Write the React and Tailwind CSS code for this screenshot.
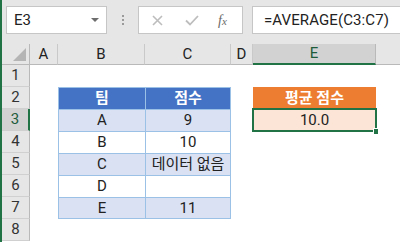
import React from 'react';

const font = { fontFamily: 'Roboto, "Noto Sans CJK KR", sans-serif' };

const cols = ['A', 'B', 'C', 'D', 'E'];

const rows = [
  { n: 1 },
  { n: 2, b: '팀', c: '점수', head: true, e: '평균 점수' },
  { n: 3, b: 'A', c: '9', band: true, e: '10.0' },
  { n: 4, b: 'B', c: '10' },
  { n: 5, b: 'C', c: '데이터 없음', band: true },
  { n: 6, b: 'D', c: '' },
  { n: 7, b: 'E', c: '11', band: true, last: true },
  { n: 8 },
];

const TopBar = () => (
  <div className="h-[44px] shrink-0 bg-[#e6e6e6] flex items-start pt-[6px] pl-[4px]">
    <div className="w-[101px] h-[28px] border border-[#c6c6c6] bg-white flex items-center justify-between pl-[7px] pr-[7px]">
      <span className="text-[15px] text-[#222]">E3</span>
      <svg width="8" height="5" viewBox="0 0 8 5">
        <path d="M0 0 H8 L4 4 Z" fill="#6d6d6d" />
      </svg>
    </div>
    <div className="w-[31px] h-[28px] flex flex-col items-center justify-center gap-[2px]">
      <span className="w-[2px] h-[2px] bg-[#9a9a9a]" />
      <span className="w-[2px] h-[2px] bg-[#9a9a9a]" />
      <span className="w-[2px] h-[2px] bg-[#9a9a9a]" />
    </div>
    <div className="w-[105px] h-[28px] border border-[#c6c6c6] bg-white flex items-center">
      <svg className="ml-[13px]" width="11" height="11" viewBox="0 0 11 11">
        <path d="M1 1 L10 10 M10 1 L1 10" stroke="#bdbdbd" strokeWidth="1.6" />
      </svg>
      <svg className="ml-[22px]" width="14" height="11" viewBox="0 0 14 11">
        <path d="M1 5.5 L5 9.5 L13 1" stroke="#bdbdbd" strokeWidth="1.8" fill="none" />
      </svg>
      <span
        className="ml-[19px] text-[14px] italic text-[#6a6a6a]"
        style={{ fontFamily: '"Liberation Serif", serif' }}
      >
        f<span className="text-[11px]">x</span>
      </span>
    </div>
    <div className="ml-[9px] flex-1 h-[28px] border border-r-0 border-[#c6c6c6] bg-white flex items-center pl-[11px]">
      <span className="text-[15px] text-[#222] tracking-[0.1px]">=AVERAGE(C3:C7)</span>
    </div>
  </div>
);

const ColHeader = () => (
  <>
    <div className="bg-[#e6e6e6] border-r border-b border-[#b9b9b9] flex items-end justify-end p-[3px]">
      <svg width="13" height="13" viewBox="0 0 13 13">
        <path d="M13 0 V13 H0 Z" fill="#b5b5b5" />
      </svg>
    </div>
    {cols.map((c) =>
      c === 'E' ? (
        <div
          key={c}
          className="bg-[#d2d2d2] border-r border-[#b9b9b9] border-b-2 border-b-[#217346] flex items-center justify-center text-[15px] text-[#1e5c3a]"
        >
          {c}
        </div>
      ) : (
        <div
          key={c}
          className="bg-[#e6e6e6] border-r border-b border-[#c9c9c9] border-b-[#b9b9b9] flex items-center justify-center text-[15px] text-[#222]"
        >
          {c}
        </div>
      )
    )}
    <div className="bg-[#e6e6e6] border-b border-[#b9b9b9]" />
  </>
);

const tableCell = (r, isFirst) => {
  const base = 'flex items-center justify-center text-[15px] border-[#9bc2e6] border-t';
  const left = 'border-l';
  const right = isFirst ? '' : 'border-r';
  const bottom = r.last ? 'border-b' : '';
  let bg = 'bg-white text-[#222]';
  if (r.head) bg = 'bg-[#4472c4] text-white font-bold';
  else if (r.band) bg = 'bg-[#d9e1f2] text-[#222]';
  return [base, left, right, bottom, bg].join(' ');
};

const Row = ({ r }) => {
  const inTable = r.b !== undefined;
  const selected = r.n === 3;
  return (
    <>
      {selected ? (
        <div className="bg-[#d2d2d2] border-b border-[#cfcfcf] border-r-2 border-r-[#217346] flex items-center justify-center text-[15px] text-[#1e5c3a]">
          {r.n}
        </div>
      ) : (
        <div className="bg-[#e6e6e6] border-b border-[#d0d0d0] border-r border-r-[#b9b9b9] flex items-center justify-center text-[15px] text-[#333]">
          {r.n}
        </div>
      )}
      <div />
      {inTable ? (
        <>
          <div className={tableCell(r, true)}>{r.b}</div>
          <div className={tableCell(r, false)}>
            <span className="whitespace-nowrap">{r.c}</span>
          </div>
        </>
      ) : (
        <>
          <div />
          <div />
        </>
      )}
      <div />
      {r.n === 2 ? (
        <div className="bg-[#ed7d31] text-white font-bold text-[15px] flex items-center justify-center">
          {r.e}
        </div>
      ) : r.n === 3 ? (
        <div className="relative bg-[#fce4d6] text-[#222] text-[15px] flex items-center justify-center">
          {r.e}
          <div className="absolute -left-[1px] -top-[1px] -right-[1px] -bottom-[1px] border-2 border-[#217346]" />
          <div className="absolute -right-[2px] -bottom-[3px] w-[5px] h-[6px] bg-[#217346] border-l border-t border-white" />
        </div>
      ) : (
        <div />
      )}
      <div />
    </>
  );
};

export default function App() {
  return (
    <div
      className="w-[400px] h-[242px] overflow-hidden bg-white border-l-2 border-[#217346] flex flex-col"
      style={font}
    >
      <TopBar />
      <div className="grid grid-cols-[28px_28px_87px_86px_22px_123px_1fr] grid-rows-[21px_repeat(8,22px)] leading-none">
        <ColHeader />
        {rows.map((r) => (
          <Row key={r.n} r={r} />
        ))}
      </div>
    </div>
  );
}
